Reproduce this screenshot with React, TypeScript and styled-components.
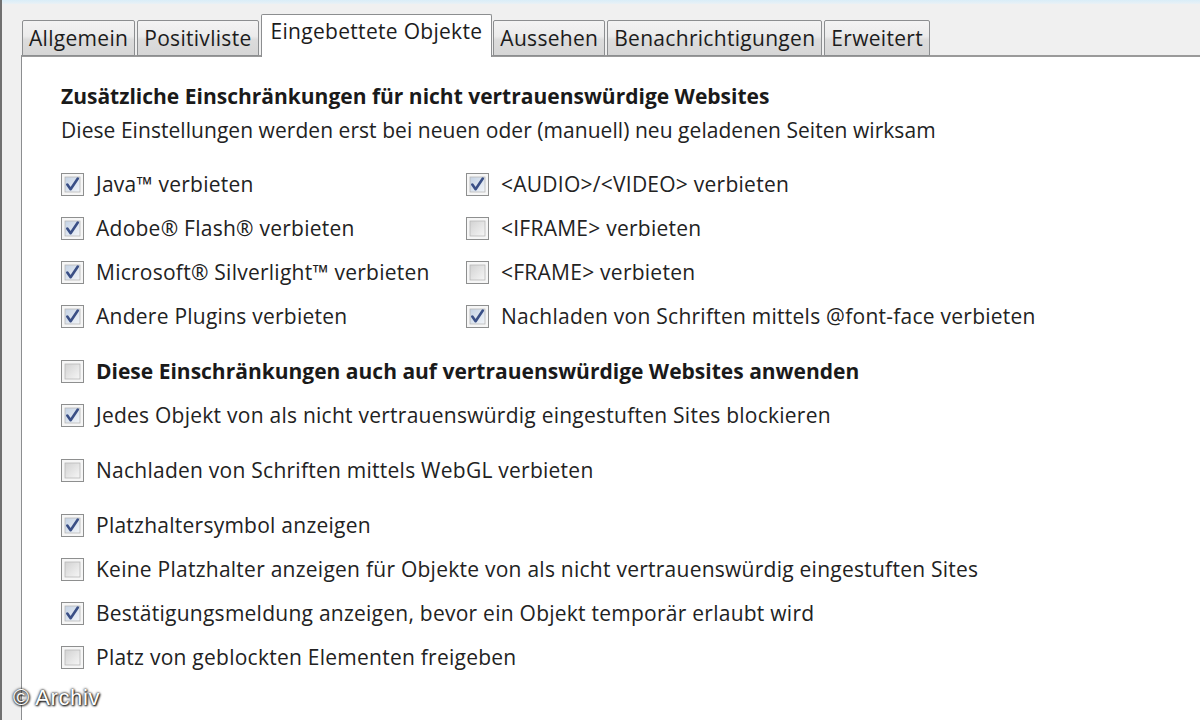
import React from 'react';
import styled, { createGlobalStyle } from 'styled-components';

const GlobalStyle = createGlobalStyle`
  html, body {
    margin: 0;
    padding: 0;
    background: #f0f0f0;
  }
  body {
    font-family: "Open Sans", "Noto Sans", sans-serif;
    color: #222;
  }
`;

const Window = styled.div`
  position: relative;
  width: 1200px;
  height: 720px;
  overflow: hidden;
  display: flex;
  flex-direction: column;
  background: #f0f0f0;
  border-left: 2px solid #707070;
  box-sizing: border-box;
`;

const TopStrip = styled.div`
  height: 4px;
  flex: none;
  background: linear-gradient(#d9edf8, #eaf1f5);
`;

const TabBar = styled.div`
  display: flex;
  align-items: flex-end;
  height: 52px;
  flex: none;
  padding-left: 20px;
  position: relative;
  z-index: 2;
`;

const Tab = styled.div<{ $active?: boolean }>`
  box-sizing: border-box;
  height: ${({ $active }) => ($active ? '43px' : '36px')};
  margin-right: ${({ $active }) => ($active ? '1px' : '2px')};
  margin-bottom: ${({ $active }) => ($active ? '-1px' : '0')};
  padding: ${({ $active }) => ($active ? '3px 9px 0' : '4px 6px 0')};
  border: 1px solid #8c8e90;
  border-bottom: ${({ $active }) => ($active ? 'none' : '1px solid #8c8e90')};
  border-radius: 2px 2px 0 0;
  background: ${({ $active }) =>
    $active ? '#ffffff' : 'linear-gradient(#f3f3f3, #ebebeb 45%, #dcdcdc 55%, #d6d6d6)'};
  font-size: 21px;
  letter-spacing: 0.3px;
  line-height: 27px;
  color: #1c1c1c;
  white-space: nowrap;
`;

const Panel = styled.div`
  flex: 1;
  margin-left: 19px;
  margin-top: -1px;
  background: #ffffff;
  border-top: 2px solid #9a9a9a;
  border-left: 1px solid #8c8e90;
  padding: 25px 0 0 39px;
`;

const Heading = styled.div`
  font-weight: 700;
  font-size: 21px;
  line-height: 28px;
  color: #1a1a1a;
`;

const SubText = styled.div`
  font-size: 21px;
  letter-spacing: 0.05px;
  line-height: 28px;
  margin-top: 6px;
  margin-bottom: 18px;
`;

const OptionGrid = styled.div`
  display: grid;
  grid-template-columns: 405px auto;
`;

const Group = styled.div<{ $gap?: number }>`
  display: flex;
  flex-direction: column;
  margin-top: ${({ $gap }) => $gap ?? 0}px;
`;

const Row = styled.label`
  display: flex;
  align-items: center;
  height: 44px;
  gap: 12px;
`;

const Label = styled.span<{ $bold?: boolean }>`
  font-size: 21px;
  letter-spacing: ${({ $bold }) => ($bold ? '0' : '0.25px')};
  line-height: 28px;
  font-weight: ${({ $bold }) => ($bold ? 700 : 400)};
  color: ${({ $bold }) => ($bold ? '#1a1a1a' : '#222')};
  white-space: nowrap;
`;

const BoxSvg = styled.svg`
  flex: none;
  width: 23px;
  height: 23px;
`;

const Watermark = styled.div`
  position: absolute;
  left: 11px;
  bottom: 10px;
  font-family: "Liberation Sans", Arial, sans-serif;
  font-size: 22px;
  letter-spacing: 0.6px;
  line-height: 24px;
  color: #ffffff;
  text-shadow: 0 0 2px #222, 0 0 3px #333, 1px 1px 2px #000;
  z-index: 5;
`;

const CheckBox: React.FC<{ checked?: boolean }> = ({ checked }) => (
  <BoxSvg viewBox="0 0 23 23">
    <defs>
      <linearGradient id={checked ? 'gOn' : 'gOff'} x1="0" y1="0" x2="1" y2="1">
        <stop offset="0" stopColor={checked ? '#c4d2e4' : '#d2d2d2'} />
        <stop offset="1" stopColor={checked ? '#f2f5f9' : '#f6f6f6'} />
      </linearGradient>
    </defs>
    <rect x="0.5" y="0.5" width="22" height="22" fill="#f6f6f6" stroke="#8e8f8f" />
    <rect x="4" y="4" width="15" height="15" fill={`url(#${checked ? 'gOn' : 'gOff'})`} stroke="#b8b8b8" strokeWidth="0.8" />
    {checked && (
      <path
        d="M6.3 11.6 L9.6 16.2 L16.8 5.6"
        fill="none"
        stroke="#3a4f86"
        strokeWidth="2.6"
        strokeLinecap="round"
        strokeLinejoin="round"
      />
    )}
  </BoxSvg>
);

const Option: React.FC<{ checked?: boolean; bold?: boolean; text: string }> = ({ checked, bold, text }) => (
  <Row>
    <CheckBox checked={checked} />
    <Label $bold={bold}>{text}</Label>
  </Row>
);

const tabs = ['Allgemein', 'Positivliste', 'Eingebettete Objekte', 'Aussehen', 'Benachrichtigungen', 'Erweitert'];

const leftCol = [
  { text: 'Java™ verbieten', checked: true },
  { text: 'Adobe® Flash® verbieten', checked: true },
  { text: 'Microsoft® Silverlight™ verbieten', checked: true },
  { text: 'Andere Plugins verbieten', checked: true },
];

const rightCol = [
  { text: '<AUDIO>/<VIDEO> verbieten', checked: true },
  { text: '<IFRAME> verbieten', checked: false },
  { text: '<FRAME> verbieten', checked: false },
  { text: 'Nachladen von Schriften mittels @font-face verbieten', checked: true },
];

export default function App() {
  return (
    <>
      <GlobalStyle />
      <Window>
        <TopStrip />
        <TabBar>
          {tabs.map((t) => (
            <Tab key={t} $active={t === 'Eingebettete Objekte'}>
              {t}
            </Tab>
          ))}
        </TabBar>
        <Panel>
          <Heading>Zusätzliche Einschränkungen für nicht vertrauenswürdige Websites</Heading>
          <SubText>Diese Einstellungen werden erst bei neuen oder (manuell) neu geladenen Seiten wirksam</SubText>
          <OptionGrid>
            <Group>
              {leftCol.map((o) => (
                <Option key={o.text} {...o} />
              ))}
            </Group>
            <Group>
              {rightCol.map((o) => (
                <Option key={o.text} {...o} />
              ))}
            </Group>
          </OptionGrid>
          <Group $gap={11}>
            <Option bold text="Diese Einschränkungen auch auf vertrauenswürdige Websites anwenden" />
            <Option checked text="Jedes Objekt von als nicht vertrauenswürdig eingestuften Sites blockieren" />
          </Group>
          <Group $gap={11}>
            <Option text="Nachladen von Schriften mittels WebGL verbieten" />
          </Group>
          <Group $gap={11}>
            <Option checked text="Platzhaltersymbol anzeigen" />
            <Option text="Keine Platzhalter anzeigen für Objekte von als nicht vertrauenswürdig eingestuften Sites" />
            <Option checked text="Bestätigungsmeldung anzeigen, bevor ein Objekt temporär erlaubt wird" />
            <Option text="Platz von geblockten Elementen freigeben" />
          </Group>
        </Panel>
        <Watermark>© Archiv</Watermark>
      </Window>
    </>
  );
}
